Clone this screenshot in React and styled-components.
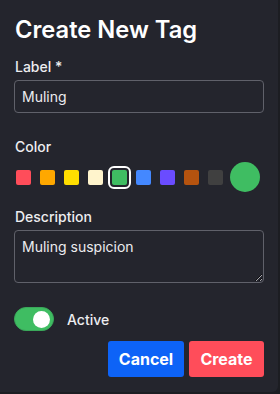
import React, { useState } from "react";
import styled, { createGlobalStyle } from "styled-components";

const Global = createGlobalStyle`
  html, body { margin: 0; padding: 0; background: #1c1d22; }
  body { font-family: Inter, "Noto Sans", sans-serif; }
  * { box-sizing: border-box; }
`;

const Panel = styled.div`
  width: 278px;
  height: 392px;
  background: #24252d;
  border-radius: 0 0 6px 0;
  padding: 17px 14px 0 14px;
  display: flex;
  flex-direction: column;
  color: #f2f2f4;
`;

const Title = styled.h1`
  margin: 0 0 14px 1px;
  font-size: 23.7px;
  line-height: 26px;
  font-weight: 600;
  color: #ffffff;
`;

const Group = styled.div`
  display: flex;
  flex-direction: column;
  gap: ${(p) => p.$gap ?? 3}px;
  margin-bottom: ${(p) => p.$mb ?? 0}px;
`;

const Label = styled.label`
  font-size: 14px;
  line-height: 20px;
  font-weight: 450;
  color: #ededf0;
  padding-left: 1px;
`;

const TextInput = styled.input`
  width: 250px;
  height: 33px;
  background: #24252d;
  border: 1px solid #60616a;
  border-radius: 4px;
  padding: 0 7px;
  font-family: inherit;
  font-size: 14px;
  color: #ececef;
  outline: none;
`;

const TextArea = styled.textarea`
  width: 250px;
  height: 53px;
  background: #24252d;
  border: 1px solid #60616a;
  border-radius: 4px;
  padding: 6px 7px;
  font-family: inherit;
  font-size: 14px;
  line-height: 20px;
  color: #ececef;
  outline: none;
  margin: 0;
  display: block;
`;

const SwatchRow = styled.div`
  display: flex;
  align-items: center;
  height: 30px;
  padding-left: 2px;
`;

const Swatch = styled.button`
  width: 15px;
  height: 15px;
  border: none;
  padding: 0;
  border-radius: 2px;
  background: ${(p) => p.$color};
  margin-right: 9px;
  outline: ${(p) => (p.$selected ? "2px solid #ffffff" : "none")};
  outline-offset: 2px;
  cursor: pointer;
`;

const Preview = styled.div`
  width: 30px;
  height: 30px;
  border-radius: 50%;
  background: ${(p) => p.$color};
  margin-left: -2px;
`;

const ToggleRow = styled.div`
  display: flex;
  align-items: center;
  gap: 13px;
  margin-bottom: 10px;
`;

const Track = styled.button`
  width: 40px;
  height: 24px;
  border-radius: 12px;
  border: 1px solid #3aa85a;
  background: ${(p) => (p.$on ? "#3fbd62" : "#55565e")};
  position: relative;
  padding: 0;
  cursor: pointer;
`;

const Knob = styled.span`
  position: absolute;
  top: 3px;
  left: ${(p) => (p.$on ? "18px" : "3px")};
  width: 17px;
  height: 17px;
  border-radius: 50%;
  background: #ffffff;
`;

const ToggleText = styled.span`
  font-size: 14px;
  font-weight: 450;
  color: #ededf0;
`;

const Actions = styled.div`
  display: flex;
  justify-content: flex-end;
  gap: 5px;
  width: 250px;
`;

const Button = styled.button`
  height: 36px;
  width: ${(p) => p.$w}px;
  border: none;
  border-radius: 3px;
  background: ${(p) => p.$bg};
  color: #ffffff;
  font-family: inherit;
  font-size: 16px;
  font-weight: 700;
  cursor: pointer;
`;

const COLORS = [
  "#ff4d5a",
  "#ffa800",
  "#ffde00",
  "#fff4cc",
  "#3fbd62",
  "#4488ff",
  "#6a4cff",
  "#b5530f",
  "#404040",
];

export default function App() {
  const [sel, setSel] = useState(4);
  const [on, setOn] = useState(true);
  return (
    <>
      <Global />
      <Panel>
        <Title>Create New Tag</Title>
        <Group $mb={24}>
          <Label>Label *</Label>
          <TextInput defaultValue="Muling" />
        </Group>
        <Group $gap={5} $mb={15}>
          <Label>Color</Label>
          <SwatchRow>
            {COLORS.map((c, i) => (
              <Swatch key={c} $color={c} $selected={i === sel} onClick={() => setSel(i)} />
            ))}
            <Preview $color={COLORS[sel]} />
          </SwatchRow>
        </Group>
        <Group $mb={24}>
          <Label>Description</Label>
          <TextArea defaultValue="Muling suspicion" />
        </Group>
        <ToggleRow>
          <Track $on={on} onClick={() => setOn(!on)}>
            <Knob $on={on} />
          </Track>
          <ToggleText>Active</ToggleText>
        </ToggleRow>
        <Actions>
          <Button $bg="#0d63f7" $w={76}>Cancel</Button>
          <Button $bg="#ff4d5a" $w={75}>Create</Button>
        </Actions>
      </Panel>
    </>
  );
}
